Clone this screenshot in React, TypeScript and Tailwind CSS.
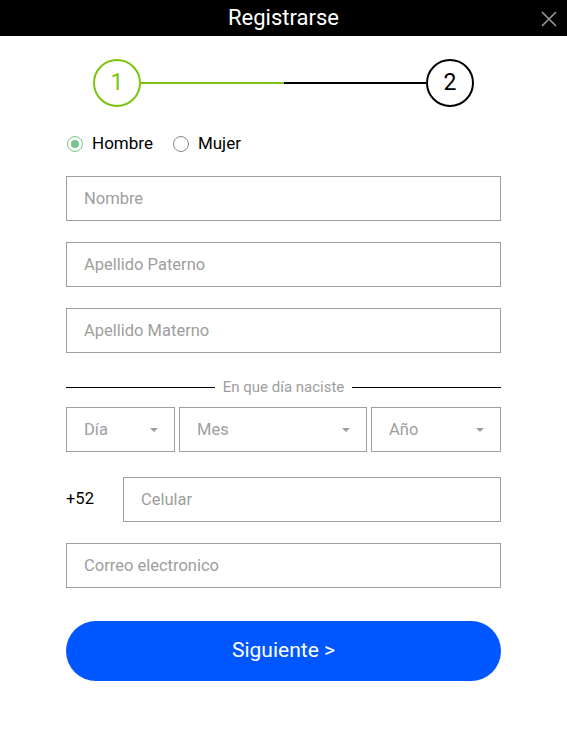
import { useState } from 'react';

const inputCls =
  'w-full h-[45px] border border-[#9e9e9e] px-[17px] text-[16.5px] text-[#333] placeholder:text-[#9e9e9e] outline-none bg-white';

function Caret() {
  return <span className="w-0 h-0 border-x-[4px] border-x-transparent border-t-[4px] border-t-[#9e9e9e]" />;
}

function SelectBox({ label, className }: { label: string; className: string }) {
  return (
    <div className={`h-[45px] border border-[#9e9e9e] flex items-center justify-between pl-[17px] pr-[16px] text-[16.5px] text-[#9e9e9e] ${className}`}>
      <span className="pt-[2px]">{label}</span>
      <Caret />
    </div>
  );
}

export default function App() {
  const [sexo, setSexo] = useState<'h' | 'm'>('h');

  return (
    <div className="w-[567px] h-[752px] bg-white" style={{ fontFamily: 'Roboto, "Liberation Sans", sans-serif' }}>
      <div className="h-[36px] bg-black relative flex items-center justify-center">
        <h1 className="text-white text-[22px] leading-none">Registrarse</h1>
        <button className="absolute right-[10px] top-[11px] w-[16px] h-[16px]" aria-label="Cerrar">
          <svg viewBox="0 0 16 16" className="w-[16px] h-[16px]">
            <path d="M1 1 L15 15 M15 1 L1 15" stroke="#9a9a9a" strokeWidth="1.6" />
          </svg>
        </button>
      </div>

      <div className="px-[66px] pb-[34px]">
        {/* stepper */}
        <div className="flex items-center pt-[23px] px-[27px]">
          <div className="w-[48px] h-[48px] rounded-full border-2 border-[#7dc40f] flex items-center justify-center text-[23px] text-[#7dc40f] shrink-0">
            1
          </div>
          <div className="flex-1 h-[2px] bg-[#7dc40f]" />
          <div className="flex-1 h-[2px] bg-black" />
          <div className="w-[48px] h-[48px] rounded-full border-2 border-black flex items-center justify-center text-[23px] text-black shrink-0">
            2
          </div>
        </div>

        {/* sexo */}
        <div className="flex items-center mt-[25px] text-[17px] text-black h-[24px]">
          <label className="flex items-center cursor-pointer ml-[1px]" onClick={() => setSexo('h')}>
            <span className={`w-[16px] h-[16px] rounded-full border flex items-center justify-center ${sexo === 'h' ? 'border-[#7cc38c]' : 'border-[#888]'}`}>
              {sexo === 'h' && <span className="w-[8px] h-[8px] rounded-full bg-[#7cc38c]" />}
            </span>
            <span className="ml-[9px]">Hombre</span>
          </label>
          <label className="flex items-center cursor-pointer ml-[20px]" onClick={() => setSexo('m')}>
            <span className={`w-[16px] h-[16px] rounded-full border flex items-center justify-center ${sexo === 'm' ? 'border-[#7cc38c]' : 'border-[#888]'}`}>
              {sexo === 'm' && <span className="w-[8px] h-[8px] rounded-full bg-[#7cc38c]" />}
            </span>
            <span className="ml-[9px]">Mujer</span>
          </label>
        </div>

        <div className="flex flex-col gap-[21px] mt-[20px]">
          <input className={inputCls} placeholder="Nombre" />
          <input className={inputCls} placeholder="Apellido Paterno" />
          <input className={inputCls} placeholder="Apellido Materno" />
        </div>

        <div className="flex items-center mt-[24px] h-[20px]">
          <div className="flex-1 h-px bg-black" />
          <span className="px-[8px] text-[15px] text-[#9e9e9e]">En que día naciste</span>
          <div className="flex-1 h-px bg-black" />
        </div>

        <div className="flex gap-[4px] mt-[10px]">
          <SelectBox label="Día" className="w-[109px]" />
          <SelectBox label="Mes" className="w-[188px]" />
          <SelectBox label="Año" className="flex-1" />
        </div>

        <div className="flex items-center mt-[25px]">
          <span className="w-[57px] shrink-0 text-[16.5px] text-black">+52</span>
          <input className={inputCls} placeholder="Celular" />
        </div>

        <input className={`${inputCls} mt-[21px]`} placeholder="Correo electronico" />

        <button className="w-full h-[60px] mt-[33px] rounded-full bg-[#0057ff] text-white text-[21px]">
          Siguiente &gt;
        </button>
      </div>
    </div>
  );
}
